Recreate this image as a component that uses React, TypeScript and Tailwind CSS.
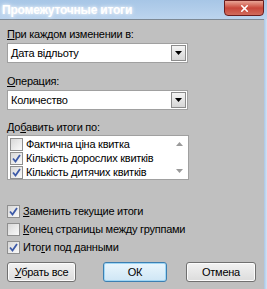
import { X } from 'lucide-react';

const font = { fontFamily: '"Liberation Sans", Arial, sans-serif' };

function Check({ checked }: { checked: boolean }) {
  return (
    <span className="w-[13px] h-[13px] shrink-0 border border-[#8f8f8f] bg-gradient-to-br from-[#d8d8d8] to-[#fafafa] flex items-center justify-center">
      {checked && (
        <svg width="9" height="9" viewBox="0 0 9 9">
          <path d="M1 4.5 L3.5 7.5 L8 1" fill="none" stroke="#3d5aa8" strokeWidth="1.8" />
        </svg>
      )}
    </span>
  );
}

function Combo({ value }: { value: string }) {
  return (
    <div className="w-[181px] h-[20px] flex bg-white border border-[#a0a0a0]">
      <div className="flex-1 pl-[3px] flex items-center text-black">{value}</div>
      <div className="w-[15px] m-[1px] border border-[#8c8c8c] bg-gradient-to-b from-[#f4f4f4] to-[#d6d6d6] flex items-center justify-center">
        <svg width="7" height="4" viewBox="0 0 7 4">
          <path d="M0 0 H7 L3.5 4 Z" fill="#000" />
        </svg>
      </div>
    </div>
  );
}

function Btn({ children, primary, w }: { children: React.ReactNode; primary?: boolean; w: string }) {
  return (
    <button
      className={
        w +
        ' h-[20px] rounded-[3px] border text-black bg-gradient-to-b flex items-center justify-center ' +
        (primary
          ? 'border-[#3c7fb1] from-[#eaf6fd] to-[#cfe6f5] shadow-[inset_0_0_0_1px_#9ed6f5]'
          : 'border-[#707070] from-[#f2f2f2] to-[#dcdcdc] shadow-[inset_0_0_0_1px_#fcfcfc]')
      }
    >
      {children}
    </button>
  );
}

export default function App() {
  return (
    <div className="w-[267px] h-[289px] flex flex-col bg-[#b9d1ea] overflow-hidden" style={font}>
      <div className="h-[19px] relative flex items-center bg-gradient-to-b from-[#a7c6e6] to-[#bcd4ee]">
        <span className="pl-[2px] text-[12px] font-bold tracking-[-0.2px] text-white [text-shadow:0_0_4px_#ffffff,0_0_2px_#dbe8f6]">
          Промежуточные итоги
        </span>
        <div className="absolute right-[3px] top-0 w-[40px] h-[16px] rounded-b-[4px] border border-[#6b1d1d] bg-gradient-to-b from-[#e8a496] via-[#c8463a] to-[#d06b5c] flex items-center justify-center">
          <X size={11} strokeWidth={3.5} className="text-white" />
        </div>
      </div>
      <div className="flex-1 flex">
        <div className="flex-1 bg-[#c0c0c0] border-t border-[#7d8894] pt-[7px] px-[7px] flex flex-col text-[11px] tracking-[-0.25px] text-black leading-[14px]">
          <div>
            <u>П</u>ри каждом изменении в:
          </div>
          <div className="mt-[2px]">
            <Combo value="Дата відльоту" />
          </div>
          <div className="mt-[11px]">
            <u>О</u>перация:
          </div>
          <div className="mt-[2px]">
            <Combo value="Количество" />
          </div>
          <div className="mt-[10px]">
            До<u>б</u>авить итоги по:
          </div>
          <div className="mt-[1px] w-[182px] h-[45px] bg-white border border-[#a0a0a0] flex">
            <div className="flex-1 flex flex-col pt-[1px] pl-[2px]">
              {[
                ['Фактична ціна квитка', false],
                ['Кількість дорослих квитків', true],
                ['Кількість дитячих квитків', true],
              ].map(([t, c]) => (
                <div key={t as string} className="h-[14px] flex items-center gap-[3px] whitespace-nowrap">
                  <Check checked={c as boolean} />
                  <span>{t as string}</span>
                </div>
              ))}
            </div>
            <div className="w-[15px] flex flex-col justify-between items-center py-[6px] mr-[1px]">
              <svg width="7" height="4" viewBox="0 0 7 4">
                <path d="M0 4 H7 L3.5 0 Z" fill="#9a9a9a" />
              </svg>
              <svg width="7" height="4" viewBox="0 0 7 4">
                <path d="M0 0 H7 L3.5 4 Z" fill="#9a9a9a" />
              </svg>
            </div>
          </div>
          <div className="mt-[24px] flex flex-col gap-[4px]">
            <div className="h-[14px] flex items-center gap-[3px]">
              <Check checked />
              <span>
                <u>З</u>аменить текущие итоги
              </span>
            </div>
            <div className="h-[14px] flex items-center gap-[3px]">
              <Check checked={false} />
              <span>
                <u>К</u>онец страницы между группами
              </span>
            </div>
            <div className="h-[14px] flex items-center gap-[3px]">
              <Check checked />
              <span>
                Ито<u>г</u>и под данными
              </span>
            </div>
          </div>
          <div className="mt-[8px] flex items-center">
            <Btn w="w-[69px]">
              <span>
                <u>У</u>брать все
              </span>
            </Btn>
            <div className="ml-[27px]">
              <Btn w="w-[64px]" primary>
                ОК
              </Btn>
            </div>
            <div className="ml-[19px]">
              <Btn w="w-[70px]">Отмена</Btn>
            </div>
          </div>
        </div>
        <div className="w-[3px] bg-gradient-to-r from-[#a8c6e6] to-[#d5e4f4]" />
      </div>
    </div>
  );
}
